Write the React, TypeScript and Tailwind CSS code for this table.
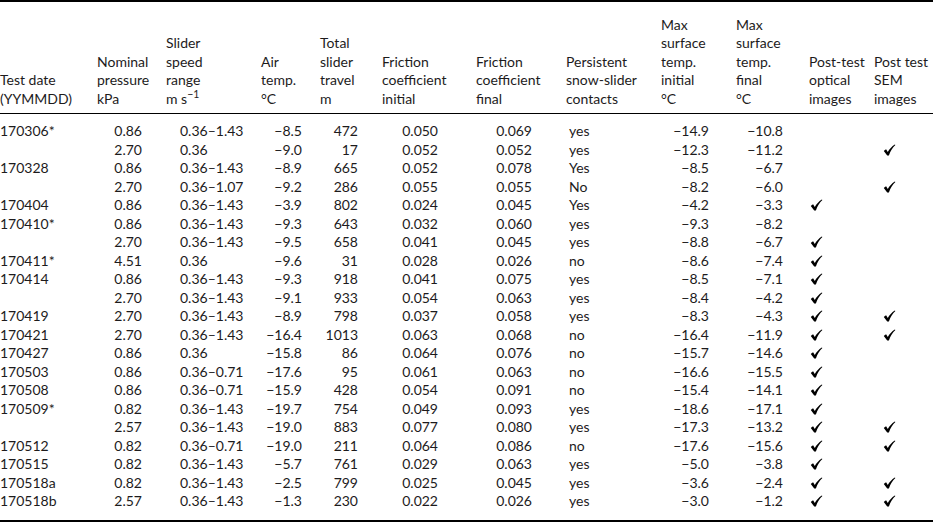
import React from 'react';

type Row = [string, string, string, string, string, string, string, string, string, string, boolean, boolean];

const ROWS: Row[] = [
  ['170306*', '0.86', '0.36–1.43', '−8.5', '472', '0.050', '0.069', 'yes', '−14.9', '−10.8', false, false],
  ['', '2.70', '0.36', '−9.0', '17', '0.052', '0.052', 'yes', '−12.3', '−11.2', false, true],
  ['170328', '0.86', '0.36–1.43', '−8.9', '665', '0.052', '0.078', 'Yes', '−8.5', '−6.7', false, false],
  ['', '2.70', '0.36–1.07', '−9.2', '286', '0.055', '0.055', 'No', '−8.2', '−6.0', false, true],
  ['170404', '0.86', '0.36–1.43', '−3.9', '802', '0.024', '0.045', 'Yes', '−4.2', '−3.3', true, false],
  ['170410*', '0.86', '0.36–1.43', '−9.3', '643', '0.032', '0.060', 'yes', '−9.3', '−8.2', false, false],
  ['', '2.70', '0.36–1.43', '−9.5', '658', '0.041', '0.045', 'yes', '−8.8', '−6.7', true, false],
  ['170411*', '4.51', '0.36', '−9.6', '31', '0.028', '0.026', 'no', '−8.6', '−7.4', true, false],
  ['170414', '0.86', '0.36–1.43', '−9.3', '918', '0.041', '0.075', 'yes', '−8.5', '−7.1', true, false],
  ['', '2.70', '0.36–1.43', '−9.1', '933', '0.054', '0.063', 'yes', '−8.4', '−4.2', true, false],
  ['170419', '2.70', '0.36–1.43', '−8.9', '798', '0.037', '0.058', 'yes', '−8.3', '−4.3', true, true],
  ['170421', '2.70', '0.36–1.43', '−16.4', '1013', '0.063', '0.068', 'no', '−16.4', '−11.9', true, true],
  ['170427', '0.86', '0.36', '−15.8', '86', '0.064', '0.076', 'no', '−15.7', '−14.6', true, false],
  ['170503', '0.86', '0.36–0.71', '−17.6', '95', '0.061', '0.063', 'no', '−16.6', '−15.5', true, false],
  ['170508', '0.86', '0.36–0.71', '−15.9', '428', '0.054', '0.091', 'no', '−15.4', '−14.1', true, false],
  ['170509*', '0.82', '0.36–1.43', '−19.7', '754', '0.049', '0.093', 'yes', '−18.6', '−17.1', true, false],
  ['', '2.57', '0.36–1.43', '−19.0', '883', '0.077', '0.080', 'yes', '−17.3', '−13.2', true, true],
  ['170512', '0.82', '0.36–0.71', '−19.0', '211', '0.064', '0.086', 'no', '−17.6', '−15.6', true, true],
  ['170515', '0.82', '0.36–1.43', '−5.7', '761', '0.029', '0.063', 'yes', '−5.0', '−3.8', true, false],
  ['170518a', '0.82', '0.36–1.43', '−2.5', '799', '0.025', '0.045', 'yes', '−3.6', '−2.4', true, true],
  ['170518b', '2.57', '0.36–1.43', '−1.3', '230', '0.022', '0.026', 'yes', '−3.0', '−1.2', true, true],
];

const GRID =
  'grid grid-cols-[97px_69px_95px_59px_62px_94px_90px_95px_75px_73px_65px_59px]';

function Check() {
  return (
    <svg width="13" height="12" viewBox="0 0 12 12" className="inline-block">
      <path
        d="M0.3 7 C1 6.1 1.8 5.5 2.6 5.2 L4.3 7.9 C6 5 8.2 2.3 11.3 0.4 L11.9 1.1 C9.2 3.6 6.9 7 5.4 11.4 L3.7 11.4 Z"
        fill="#000"
      />
    </svg>
  );
}

export default function App() {
  return (
    <div className="w-[933px] h-[524px] bg-white text-[#1d1b1c] text-[14px] leading-[18.4px] font-['Lato',sans-serif]">
      <div className="border-t-2 border-black" />
      <div className={`${GRID} items-end pt-[14px] pb-[5px] border-b border-black`}>
        <div>Test date<br />(YYMMDD)</div>
        <div>Nominal<br />pressure<br />kPa</div>
        <div>Slider<br />speed<br />range<br />m s<sup>−1</sup></div>
        <div>Air<br />temp.<br />°C</div>
        <div>Total<br />slider<br />travel<br />m</div>
        <div>Friction<br />coefficient<br />initial</div>
        <div>Friction<br />coefficient<br />final</div>
        <div>Persistent<br />snow-slider<br />contacts</div>
        <div>Max<br />surface<br />temp.<br />initial<br />°C</div>
        <div>Max<br />surface<br />temp.<br />final<br />°C</div>
        <div>Post-test<br />optical<br />images</div>
        <div>Post test<br />SEM<br />images</div>
      </div>
      <div className="pt-[8px] pb-[9px] border-b-2 border-black">
        {ROWS.map((r, i) => (
          <div key={i} className={`${GRID} h-[18.5px] items-center`}>
            <div>{r[0]}</div>
            <div className="text-right pr-[24px]">{r[1]}</div>
            <div className="pl-[14px]">{r[2]}</div>
            <div className="text-right pr-[18px]">{r[3]}</div>
            <div className="text-right pr-[24px]">{r[4]}</div>
            <div className="text-right pr-[38px]">{r[5]}</div>
            <div className="text-right pr-[34px]">{r[6]}</div>
            <div className="pl-[3px]">{r[7]}</div>
            <div className="text-right pr-[27px]">{r[8]}</div>
            <div className="text-right pr-[26px]">{r[9]}</div>
            <div className="pl-[1px] flex items-center">{r[10] ? <Check /> : null}</div>
            <div className="pl-[9px] flex items-center">{r[11] ? <Check /> : null}</div>
          </div>
        ))}
      </div>
    </div>
  );
}
